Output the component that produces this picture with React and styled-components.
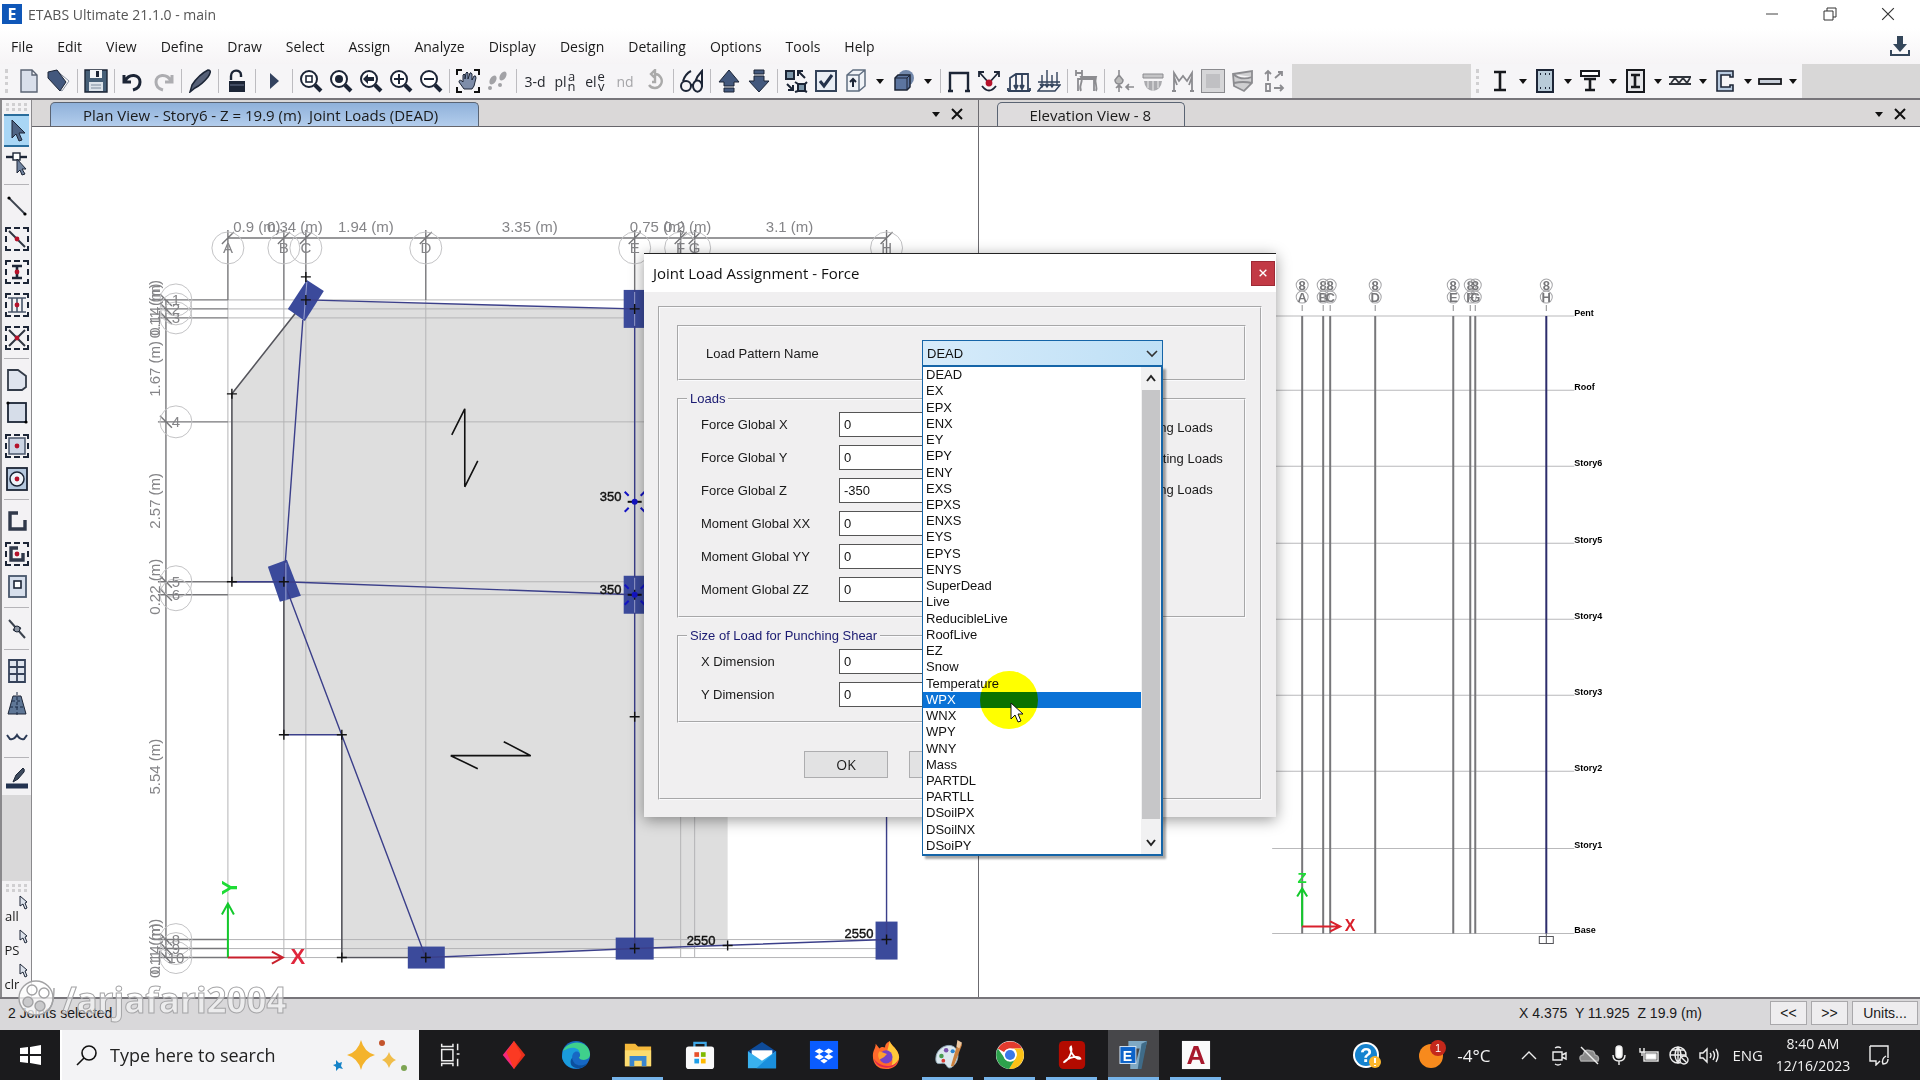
import React, { useState } from "react";
import styled, { createGlobalStyle, css } from "styled-components";

const INK = "#1c2536";
const NAVY = "#43587d";
const MUTED = "#8c8c90";
const RED = "#b5122b";

const menus = ["File", "Edit", "View", "Define", "Draw", "Select", "Assign", "Analyze", "Display", "Design", "Detailing", "Options", "Tools", "Help"];

const mainTools = [
  "new", "open", "|", "save", "|", "undo", "redo", "|", "pen", "|", "lock", "|", "run", "|",
  "zoomWindow", "zoomAll", "zoomBack", "zoomIn", "zoomOut", "|", "hand", "steps", "|",
  "view3d", "plan", "elev", "nd", "rotate", "|", "glasses", "|", "up", "down", "|",
  "shrink", "check", "box", "v", "solid", "v", "|", "frame", "joint", "lineLoad", "areaLoad", "|",
  "deform", "|", "drop", "shade", "moment", "panel", "stress", "axes",
];
const sectionTools = ["sectionI", "sectionRect", "sectionT", "sectionBox", "joist", "sectionC", "plate"];

const drawTools = [
  "pointer", "reshape", "|", "line", "quickLine", "quickColumn", "quickBeams", "quickBrace", "|",
  "poly", "rect", "quickRect", "circleArea", "|", "wall", "quickWall", "opening", "|",
  "link", "|", "grid", "tower", "tendon", "|", "sketch",
];

const patterns = [
  "DEAD", "EX", "EPX", "ENX", "EY", "EPY", "ENY", "EXS", "EPXS", "ENXS", "EYS", "EPYS", "ENYS",
  "SuperDead", "Live", "ReducibleLive", "RoofLive", "EZ", "Snow", "Temperature", "WPX", "WNX",
  "WPY", "WNY", "Mass", "PARTDL", "PARTLL", "DSoilPX", "DSoilNX", "DSoiPY",
];

const forces = [
  ["Force Global X", "0"],
  ["Force Global Y", "0"],
  ["Force Global Z", "-350"],
  ["Moment Global XX", "0"],
  ["Moment Global YY", "0"],
  ["Moment Global ZZ", "0"],
];
const sizes = [
  ["X Dimension", "0"],
  ["Y Dimension", "0"],
];
const loadOptions = ["Add to Existing Loads", "Replace Existing Loads", "Delete Existing Loads"];

const brackets = <path d="M1 5V1H6M9 1H15M18 1H23V5M23 9V15M23 19V23H18M15 23H9M6 23H1V19M1 15V9" stroke={INK} strokeWidth="2" fill="none" />;
const dot = <circle cx="12" cy="12" r="2.4" fill={RED} />;
const lens = (
  <>
    <circle cx="10" cy="10" r="8" fill="#fff" stroke={INK} strokeWidth="2" />
    <path d="M16 16L22 22" stroke={INK} strokeWidth="4" />
  </>
);
const arrowShape = "M7 1V19L11 15L14 22L17 21L14 14H20Z";

const glyphs = {
  new: <path d="M4 1H15L20 6V23H4ZM15 1V6H20" fill="#d9dfeb" stroke="#5b6474" strokeWidth="1.4" />,
  open: (
    <>
      <path d="M10 2L22 12L15 22L12 20" fill="#fff" stroke="#8b93a3" />
      <path d="M1 3L10 1L19 13L13 22L1 9Z" fill={NAVY} stroke={INK} />
    </>
  ),
  save: (
    <>
      <path d="M1 1H23V23H1Z" fill="#465f77" stroke={INK} strokeWidth="1.4" />
      <path d="M6 1H18V9H6Z" fill="#f4f6f9" />
      <path d="M12 2H15V8H12Z" fill={INK} />
      <path d="M5 13H19V22H5Z" fill="#dce3ea" />
      <path d="M7 16H17M7 19H17" stroke="#7d8b9c" />
    </>
  ),
  undo: <path d="M3 6V13H10M4 12C8 4 19 5 19 13C19 17 16 20 12 21" fill="none" stroke={INK} strokeWidth="3" />,
  redo: <path d="M21 6V13H14M20 12C16 4 5 5 5 13C5 17 8 20 12 21" fill="none" stroke="#adadb1" strokeWidth="3" />,
  pen: <path d="M2 23L4 16C8 10 14 4 20 1C24 1 22 5 20 8C16 13 11 17 7 19Z" fill="#566077" stroke={INK} strokeWidth="1.5" />,
  lock: (
    <>
      <path d="M6 11V7C6 0 16 0 16 6V8" fill="none" stroke={INK} strokeWidth="2.4" />
      <rect x="4" y="12" width="16" height="11" fill={INK} />
      <path d="M5 16H19" stroke="#66728b" />
    </>
  ),
  run: <path d="M8 4L17 12L8 20Z" fill="#33425f" />,
  zoomWindow: <>{lens}<rect x="7" y="7" width="6" height="6" fill="none" stroke={INK} strokeWidth="1.6" /></>,
  zoomAll: <>{lens}<circle cx="10" cy="10" r="4" fill={INK} /></>,
  zoomBack: <>{lens}<path d="M4 10L9 5V8H15V12H9V15Z" fill={INK} /></>,
  zoomIn: <>{lens}<path d="M10 5V15M5 10H15" stroke={INK} strokeWidth="2" /></>,
  zoomOut: <>{lens}<path d="M5 10H15" stroke={INK} strokeWidth="2" /></>,
  hand: (
    <>
      <path d="M1 6V1H6M18 1H23V6M23 18V23H18M6 23H1V18" fill="none" stroke="#111" strokeWidth="2" />
      <path d="M8 20L3 13Q3 10 6 12L7 13V6Q8 4 9 6V10L10 4Q11 2 12 4V10L14 4Q15 3 16 5V11L18 7Q20 6 20 9L18 17L16 20Z" fill="#7e8da9" stroke={INK} />
    </>
  ),
  steps: <g fill="#a2a2a6"><ellipse cx="7" cy="11" rx="3" ry="5" transform="rotate(30 7 11)" /><circle cx="4" cy="19" r="2" /><ellipse cx="17" cy="7" rx="3" ry="5" transform="rotate(30 17 7)" /><circle cx="14" cy="16" r="2" /></g>,
  rotate: <path d="M12 5A7 7 0 1 1 6 16M12 1V9L8 5ZM12 10V13H9" fill="none" stroke="#aaa" strokeWidth="2.4" />,
  glasses: <path d="M3 12C5 6 9 3 11 2M15 13C17 7 20 4 22 2V18M1 17A5 5 0 1 0 11 17A5 5 0 1 0 1 17M13 17A4 5 0 1 0 22 17A4 5 0 1 0 13 17M11 16L13 16" fill="none" stroke={INK} strokeWidth="2" />,
  up: <path d="M12 1L22 13H17V17H7V13H2ZM7 19H17V23H7Z" fill={NAVY} stroke={INK} />,
  down: <path d="M12 23L22 12H17V7H7V12H2ZM7 1H17V5H7Z" fill={NAVY} stroke={INK} />,
  shrink: <g fill="none" stroke={INK} strokeWidth="2"><rect x="2" y="2" width="8" height="8" fill="#7c95a8" /><path d="M21 9L14 2M14 7V2H19M3 15L9 21M9 16V21H4" /><rect x="14" y="15" width="7" height="7" fill="#7c95a8" /><path d="M11 13L14 15M23 13L21 15M11 23L14 22M23 23L21 22" /></g>,
  check: <><rect x="2" y="2" width="20" height="20" fill="#e9eef5" stroke="#34435a" strokeWidth="2" /><path d="M6 12L10 17L18 6" fill="none" stroke="#22314a" strokeWidth="3" /></>,
  box: <><path d="M3 6L9 1H21V17L15 22H3ZM3 6H15V22M15 6L21 1" fill="#f0f3f7" stroke="#5f6d80" strokeWidth="1.5" /><path d="M9 18V10M6 13L9 10L12 13" fill="none" stroke={INK} strokeWidth="2" /></>,
  solid: <><circle cx="14" cy="9" r="8" fill="#7288ab" /><path d="M3 9L6 6H18V18L15 21H3Z" fill="#5c75a0" stroke={INK} strokeWidth="1.5" /><path d="M3 9H15V21M15 9L18 6" fill="none" stroke={INK} /></>,
  frame: <path d="M3 22V4H21V22M1 22H6M18 22H23" fill="none" stroke={INK} strokeWidth="2.4" />,
  joint: <><path d="M12 14L3 4M12 14L21 4M2 8V3H7M17 3H22V8M5 17Q12 26 19 17" fill="none" stroke={INK} strokeWidth="1.8" /><circle cx="12" cy="14" r="3.4" fill={RED} /></>,
  lineLoad: <path d="M1 22H23M3 22V9L9 5H21V22M9 5V19M15 5V19M7 16L9 20L11 16M13 16L15 20L17 16M1 22V19M23 22V19" fill="none" stroke="#32425b" strokeWidth="1.8" />,
  areaLoad: <path d="M1 22L6 16H23L18 22ZM5 6V17M10 1V17M15 6V17M20 3V17M1 13H23M3 15L5 18L7 15M8 15L10 18L12 15M13 15L15 18L17 15" fill="none" stroke="#32425b" strokeWidth="1.4" />,
  deform: <path d="M2 1V7M2 4H8M8 1V7M4 22V10H20V22M7 22C4 16 10 13 7 8H22C20 14 24 18 22 22" fill="none" stroke={MUTED} strokeWidth="1.8" />,
  drop: <path d="M8 1V6L4 11A4 4 0 0 0 12 11L8 6M8 23V17M5 19L8 16L11 19M23 18H15M18 15L15 18L18 21" fill="#bbb" stroke={MUTED} strokeWidth="1.6" />,
  shade: <><path d="M2 5H22V9H2Z" fill="#c4c4c6" stroke={MUTED} /><path d="M3 12H21Q20 21 12 22Q4 21 3 12Z" fill="#aaaaae" /><path d="M7 12V19M12 12V22M17 12V19" stroke="#eee" /></>,
  moment: <path d="M3 22V4L8 12L12 7L16 12L21 4V22M1 22H5M19 22H23M3 8L6 16M21 8L18 16" fill="none" stroke={MUTED} strokeWidth="1.8" />,
  panel: <><rect x="0" y="0" width="24" height="24" fill="#d6d6d8" stroke="#8a8a8e" strokeWidth="2" /><rect x="5" y="5" width="14" height="14" fill="#c0c0c3" /></>,
  stress: <path d="M2 5L21 2V14L13 22L3 17ZM2 5Q10 12 21 8M3 14Q12 12 21 14" fill="#cfcfd1" stroke={MUTED} strokeWidth="1.8" />,
  axes: <path d="M7 12V2M4 5L7 2L10 5M14 9L21 3M17 3H21V7M13 19H22M19 16L22 19L19 22M5 15H9V22H5Z" fill="none" stroke={MUTED} strokeWidth="1.8" />,
  sectionI: <path d="M6 3H18M12 3V21M6 21H18" fill="none" stroke="#17191d" strokeWidth="2.6" />,
  sectionRect: <><rect x="4" y="1" width="16" height="22" fill="#b9cbd8" stroke={INK} strokeWidth="2" /><path d="M7 5H8M12 5H13M16 5H17M7 19H8M12 19H13M16 19H17" stroke={INK} strokeWidth="2" /></>,
  sectionT: <><rect x="3" y="2" width="18" height="5" fill="#fff" stroke="#17191d" strokeWidth="2" /><path d="M6 10H18M12 10V21M7 21H17" stroke="#17191d" strokeWidth="2.6" /></>,
  sectionBox: <><rect x="4" y="1" width="17" height="22" fill="#e6e7ea" stroke="#17191d" strokeWidth="2" /><path d="M8 6H17M12 6V18M8 18H17" stroke="#17191d" strokeWidth="2.6" /></>,
  joist: <path d="M1 8H23M1 15H23M3 14L7 9L11 14L15 9L19 14L22 9" fill="none" stroke="#30343b" strokeWidth="1.8" />,
  sectionC: <path d="M20 8V2H4V22H20V16H17V18H8V6H17V8Z" fill="#b9cbe0" stroke={INK} strokeWidth="1.6" />,
  plate: <rect x="1" y="10" width="22" height="5" fill="#c7ced9" stroke="#17191d" strokeWidth="1.8" />,
  pointer: <path d={arrowShape} fill="#4e6484" stroke={INK} />,
  reshape: <><path d="M1 5H22" stroke={INK} strokeWidth="2.4" /><rect x="8" y="1" width="7" height="7" fill="#fff" stroke={INK} strokeWidth="1.4" /><path d="M12 7V21L15 18L17 23L20 22L17 17H21Z" fill="#70839f" stroke={INK} /></>,
  line: <><path d="M4 4L20 20" stroke="#3b424e" strokeWidth="1.8" /><circle cx="4" cy="4" r="1.6" /><circle cx="20" cy="20" r="1.6" /></>,
  quickLine: <>{brackets}<path d="M4 4L20 20" stroke="#2f3540" strokeWidth="2" />{dot}</>,
  quickColumn: <>{brackets}<path d="M7 6H17M12 6V18M7 18H17" stroke={INK} strokeWidth="2.6" />{dot}</>,
  quickBeams: <>{brackets}<path d="M3 5H21M3 19H21M7 5V19M12 5V19M17 5V19" stroke="#49566a" strokeWidth="1.6" />{dot}</>,
  quickBrace: <>{brackets}<path d="M4 4L20 20M20 4L4 20" stroke="#2f3540" strokeWidth="2" />{dot}</>,
  poly: <path d="M3 2H13L21 8V19L17 22H3Z" fill="#dfe4ee" stroke="#333b48" strokeWidth="1.8" />,
  rect: <><rect x="3" y="2" width="18" height="19" fill="#d6dde9" stroke={INK} strokeWidth="1.8" /><circle cx="3" cy="2" r="1.6" /><circle cx="21" cy="21" r="1.6" /></>,
  quickRect: <>{brackets}<rect x="4" y="4" width="16" height="16" fill="#cdd6e5" stroke="#49566a" strokeWidth="1.5" />{dot}</>,
  circleArea: <><rect x="2" y="1" width="20" height="22" fill="#b6c9df" stroke={INK} strokeWidth="1.8" /><circle cx="12" cy="12" r="7" fill="#eef3f9" stroke={INK} strokeWidth="1.5" />{dot}</>,
  wall: <path d="M13 4H5V20H20V11" fill="none" stroke="#30394a" strokeWidth="3.4" />,
  quickWall: <>{brackets}<path d="M13 6H6V18H18V11" fill="none" stroke="#30394a" strokeWidth="3.4" />{dot}</>,
  opening: <><rect x="4" y="1" width="17" height="21" fill="#d7dfec" stroke="#48566b" strokeWidth="1.8" /><rect x="9" y="6" width="7" height="7" fill="#fff" stroke={INK} strokeWidth="1.6" /></>,
  link: <><path d="M4 3L20 21M8 13L16 11" stroke="#3b424e" strokeWidth="2" /><circle cx="12" cy="12" r="3" fill="#8b93a0" stroke={INK} /></>,
  grid: <path d="M4 1H20V23H4ZM4 8H20M4 15H20M12 1V23" fill="#dfe5ef" stroke="#35425a" strokeWidth="1.8" />,
  tower: <><path d="M8 4H16L21 22H3Z" fill="#5f7796" stroke={INK} /><path d="M12 0V24M5 15H19M7 9H17" stroke="#1a2a44" strokeDasharray="3 2" /></>,
  tendon: <path d="M2 10L5 14Q9 15 12 10Q15 15 19 14L22 10" fill="none" stroke="#2b3a55" strokeWidth="2" />,
  sketch: <><path d="M8 15L11 8L18 1Q20 2 19 5L13 12Z" fill="#3d4a5d" stroke={INK} /><path d="M1 19H23" stroke="#22324f" strokeWidth="5" /></>,
};

const textGlyphs = {
  view3d: "3-d",
  plan: ["pl", "a", "n"],
  elev: ["el", "e", "v"],
  nd: "nd",
};

const Glyph = ({ name }) => (
  <svg width="24" height="24" viewBox="0 0 24 24" aria-hidden="true">
    {glyphs[name]}
  </svg>
);

const ToolGlyph = ({ name }) => {
  const text = textGlyphs[name];
  if (!text) return <Glyph name={name} />;
  if (typeof text === "string") return <ToolText $muted={name === "nd"}>{text}</ToolText>;
  return (
    <ToolText>
      {text[0]}
      <Stacked>
        <span>{text[1]}</span>
        <span>{text[2]}</span>
      </Stacked>
    </ToolText>
  );
};

const CaretIcon = () => (
  <svg width="8" height="5" viewBox="0 0 8 5" aria-hidden="true">
    <path d="M0 0H8L4 5Z" fill="#111" />
  </svg>
);

const CloseIcon = ({ size, color, weight }) => (
  <svg width={size} height={size} viewBox="0 0 12 12" aria-hidden="true">
    <path d="M1 1L11 11M11 1L1 11" stroke={color} strokeWidth={weight} />
  </svg>
);

/* plan canvas */

const gridX = { A: 228, B: 284, C: 306, D: 426, E: 635, F: 681, G: 695, H: 887 };
const gridY = [["1", 300], ["2", 309], ["3", 318], ["4", 422], ["5", 582], ["6", 595], ["8", 940], ["9", 949], ["10", 958]];
const topDims = [["0.9 (m)", 257], ["0.34 (m)", 295], ["1.94 (m)", 366], ["3.35 (m)", 530], ["0.75 (m)", 658], ["0.2 (m)", 688], ["3.1 (m)", 790]];
const sideDims = [["0.14 (m)", 308], ["0.11 (m)", 311], ["1.67 (m)", 369], ["2.57 (m)", 501], ["0.22 (m)", 587], ["5.54 (m)", 767], ["0.14 (m)", 947], ["0.11 (m)", 951]];
const nodes = [[306, 277], [306, 300], [232, 394], [232, 582], [284, 582], [284, 735], [342, 735], [342, 958], [426, 958], [635, 309], [635, 595], [635, 717], [635, 949], [728, 946], [887, 940]];

const PlanCanvas = () => (
  <CanvasSvg viewBox="32 127 946 864" preserveAspectRatio="xMinYMin meet" role="img" aria-label="Plan view">
    <path d="M306 300L635 309H728V946L635 949L426 957H342V735H284V582H232V394Z" fill="#dedede" />
    <g stroke="#b4b4b6" strokeWidth="1">
      {Object.values(gridX).map((x) => (
        <path key={x} d={`M${x} 300V958`} />
      ))}
      {gridY.map(([n, y]) => (
        <path key={n} d={`M228 ${y}H887`} />
      ))}
    </g>
    <g stroke="#77777a" strokeWidth="1.4" fill="none">
      <path d="M228 238H887M166 300V958" />
      {Object.values(gridX).map((x) => (
        <path key={x} d={`M${x} 230V300M${x - 6} 244L${x + 6} 232`} />
      ))}
      {gridY.map(([n, y]) => (
        <path key={n} d={`M158 ${y}H228M160 ${y - 6}L172 ${y + 6}`} />
      ))}
    </g>
    <g fill="none" stroke="#c3c3c5">
      {Object.values(gridX).map((x) => (
        <circle key={x} cx={x} cy="248" r="16" />
      ))}
      {gridY.map(([n, y]) => (
        <circle key={n} cx="176" cy={y} r="16" />
      ))}
    </g>
    <g fill="#858588" fontSize="15" textAnchor="middle">
      {Object.entries(gridX).map(([n, x]) => (
        <text key={n} x={x} y="253">{n}</text>
      ))}
      {gridY.map(([n, y]) => (
        <text key={n} x="176" y={y + 5}>{n}</text>
      ))}
      {topDims.map(([t, x]) => (
        <text key={t} x={x} y="232">{t}</text>
      ))}
      {sideDims.map(([t, y]) => (
        <text key={y} x="160" y={y} transform={`rotate(-90 160 ${y})`}>{t}</text>
      ))}
    </g>
    <path d="M306 300L232 394V582H284V735M342 735V958H426" fill="none" stroke="#55555c" strokeWidth="1.6" />
    <g fill="#3b4a9b">
      <path d="M307 280L324 291L305 321L288 309Z" />
      <path d="M268 567L287 560L301 596L280 602Z" />
      <rect x="624" y="290" width="22" height="38" />
      <rect x="624" y="576" width="22" height="38" />
      <rect x="408" y="947" width="37" height="22" />
      <rect x="616" y="938" width="38" height="22" />
      <rect x="876" y="922" width="22" height="38" />
    </g>
    <g fill="none" stroke="#3b3f8a" strokeWidth="1.4">
      <path d="M306 300L635 309M303 320L284 582L635 595M232 582H284M284 582L426 958L635 949L887 940M284 735H342M635 290V949M887 300V940" />
    </g>
    <path d="M307 282L304 319M286 563V601M635 292V326M635 578V613" stroke="#9aa3d2" />
    <g stroke="#111" strokeWidth="1.4">
      {nodes.map(([x, y]) => (
        <path key={`${x}-${y}`} d={`M${x - 5} ${y}H${x + 5}M${x} ${y - 5}V${y + 5}`} />
      ))}
    </g>
    <g fill="none" stroke="#111" strokeWidth="1.6">
      <path d="M452 435L465 409V487L478 461" />
      <path d="M504 742L531 756H451L478 769" />
    </g>
    {[502, 595].map((y) => (
      <g key={y} stroke="#1414c4" strokeWidth="2">
        <path d={`M628 ${y}H642`} stroke="#111" />
        <circle cx="635" cy={y} r="2" fill="#1414c4" />
        <path d={`M625 ${y - 10}L629 ${y - 6}M645 ${y - 10}L641 ${y - 6}M625 ${y + 10}L629 ${y + 6}M645 ${y + 10}L641 ${y + 6}`} />
      </g>
    ))}
    <g fill="#111" fontSize="13" stroke="#111" strokeWidth="0.4">
      <text x="600" y="501">350</text>
      <text x="600" y="594">350</text>
      <text x="687" y="945">2550</text>
      <text x="845" y="938">2550</text>
    </g>
    <g fill="none" strokeWidth="2">
      <path d="M228 958V905M222 915L228 904L234 915" stroke="#13c92c" />
      <path d="M228 958H282M272 952L283 958L272 964" stroke="#c9202c" />
    </g>
    <text x="237" y="888" fontSize="22" fontWeight="bold" fill="#1edc35" textAnchor="middle" transform="rotate(-90 237 888)">Y</text>
    <text x="298" y="964" fontSize="22" fontWeight="bold" fill="#e0263c" textAnchor="middle">X</text>
  </CanvasSvg>
);

/* elevation canvas */

const elevX = [["A", 1302], ["B", 1323], ["C", 1330], ["D", 1375], ["E", 1453], ["F", 1470], ["G", 1475], ["H", 1546]];
const stories = [["Pent", 316], ["Roof", 390], ["Story6", 466], ["Story5", 543], ["Story4", 619], ["Story3", 695], ["Story2", 771], ["Story1", 848], ["Base", 933]];

const ElevationCanvas = () => (
  <CanvasSvg viewBox="979 127 941 864" preserveAspectRatio="xMinYMin meet" role="img" aria-label="Elevation view">
    {stories.map(([name, y]) => (
      <g key={name}>
        <path d={`M1272 ${y}H1574`} stroke="#b9b9bb" />
        <text x="1574" y={y} fontSize="9" fontWeight="bold" fill="#000">{name}</text>
      </g>
    ))}
    {elevX.map(([name, x]) => (
      <g key={name}>
        <path d={`M${x} 316V933`} stroke={name === "H" ? "#2d2d6c" : "#77777a"} strokeWidth="2" />
        <path d={`M${x} 305V311`} stroke="#8c8c8e" />
        <circle cx={x} cy="285" r="6" fill="none" stroke="#a5a5a8" />
        <circle cx={x} cy="297" r="6" fill="none" stroke="#a5a5a8" />
        <g fill="#77777a" fontSize="13" fontWeight="bold" textAnchor="middle">
          <text x={x} y="290">8</text>
          <text x={x} y="302">{name}</text>
        </g>
      </g>
    ))}
    <path d="M1539 936H1553V943H1539ZM1546 933V943" fill="none" stroke="#55555a" />
    <g fill="none" strokeWidth="2">
      <path d="M1302 926V889M1297 896L1302 888L1307 896" stroke="#13c92c" />
      <path d="M1302 926H1338M1330 921L1340 926L1330 931" stroke="#d9202c" />
    </g>
    <text x="1302" y="883" fontSize="15" fontWeight="bold" fill="#1edc35" textAnchor="middle">Z</text>
    <text x="1350" y="931" fontSize="16" fontWeight="bold" fill="#d9202c" textAnchor="middle">X</text>
  </CanvasSvg>
);

/* taskbar icons */

const appIcons = {
  taskview: <path d="M5 4V7H17V4M5 28V25H17V28M5 10H17V22H5ZM22 4V11M22 20V28M21 15H24" fill="none" stroke="#eee" strokeWidth="1.6" />,
  anydesk: (
    <>
      <path d="M16 1L28 16L16 31Z" fill="#e8301c" />
      <path d="M16 1L4 16L16 31Z" fill="#f5287a" />
      <path d="M16 1L24 16L16 31L8 13Z" fill="#fb3a23" />
    </>
  ),
  edge: (
    <>
      <circle cx="16" cy="16" r="15" fill="#1768c4" />
      <path d="M2 12C5 1 29 -3 31 15C31 22 22 23 19 19C24 14 15 6 2 12Z" fill="#3fd08c" />
      <path d="M2 12C12 5 20 9 20 14C17 10 11 13 12 20C13 27 20 29 27 26C18 34 3 30 1 18Z" fill="#1a9bdc" />
      <path d="M12 19C13 27 20 29 28 25C24 31 15 32 11 27Q9 22 12 19Z" fill="#0c4f9e" />
    </>
  ),
  explorer: (
    <>
      <path d="M2 4H13L16 7H30V28H2Z" fill="#f5b93b" />
      <path d="M2 11H30V28H2Z" fill="#fddc70" />
      <path d="M7 17H25V28H20V22H12V28H7Z" fill="#3a86cf" />
    </>
  ),
  store: (
    <>
      <path d="M10 8V3H22V8" fill="none" stroke="#3fa7e6" strokeWidth="2.4" />
      <rect x="1" y="7" width="30" height="24" rx="3" fill="#fafafa" />
      <path d="M10 13H15V18H10Z" fill="#e8502a" />
      <path d="M17 13H22V18H17Z" fill="#7fba00" />
      <path d="M10 20H15V25H10Z" fill="#1c9ee8" />
      <path d="M17 20H22V25H17Z" fill="#ffb900" />
    </>
  ),
  mail: (
    <>
      <path d="M1 12L16 2L31 12V20H1Z" fill="#0e4b99" />
      <path d="M5 11H27V24H5Z" fill="#fff" />
      <path d="M1 12L16 22L31 12V30H1Z" fill="#39b1ee" />
      <path d="M31 12L10 30H31Z" fill="#1a8fdc" />
    </>
  ),
  dropbox: (
    <>
      <rect x="1" y="1" width="30" height="30" fill="#0a5cff" />
      <path d="M11 9L16 12L11 15L6 12ZM21 9L26 12L21 15L16 12ZM11 15L16 18L11 21L6 18ZM21 15L26 18L21 21L16 18ZM16 20L20 22L16 25L12 22Z" fill="#fff" />
    </>
  ),
  firefox: (
    <>
      <path d="M16 31C7 31 2 25 2 17C2 11 5 9 5 4L9 9C11 7 13 7 15 8C15 4 18 2 20 1C21 6 29 9 30 18C30 26 24 31 16 31Z" fill="#ff6a2b" />
      <path d="M20 1C21 6 29 9 30 18C29 24 25 27 22 27C25 20 20 15 17 13C18 9 19 5 20 1Z" fill="#ffc83a" />
      <circle cx="16" cy="18" r="7" fill="#7542c8" />
      <path d="M9 12L17 15L14 18L9 21Q6 16 9 12Z" fill="#ffa02e" />
      <path d="M3 20C6 32 26 33 29 21C24 31 9 29 3 20Z" fill="#e22850" />
    </>
  ),
  paint: (
    <>
      <path d="M3 20C3 9 15 3 22 7C29 11 28 24 20 29C15 32 15 26 12 25C8 24 3 28 3 20Z" fill="#dce8ee" stroke="#8fa8b5" />
      <circle cx="9" cy="17" r="2.4" fill="#4a9a52" />
      <circle cx="14" cy="11" r="2.4" fill="#7a52ad" />
      <circle cx="21" cy="12" r="2.2" fill="#2c84cf" />
      <circle cx="11" cy="22" r="2" fill="#d93d34" />
      <path d="M27 1L31 5L22 28L19 28Z" fill="#cb813f" />
      <path d="M26 0L31 3L28 9L25 7Z" fill="#ecc7a0" />
    </>
  ),
  chrome: (
    <>
      <circle cx="16" cy="16" r="15" fill="#fff" />
      <path d="M3 9A15 15 0 0 1 29 9H16A7 7 0 0 0 10 13Z" fill="#e33b2e" />
      <path d="M29 9A15 15 0 0 1 15 31L22 19A7 7 0 0 0 20 9Z" fill="#fbc116" />
      <path d="M3 9A15 15 0 0 0 15 31L21 21A7 7 0 0 1 10 19Z" fill="#2da14c" />
      <circle cx="16" cy="16" r="7" fill="#fff" />
      <circle cx="16" cy="16" r="5.4" fill="#3b78e7" />
    </>
  ),
  acrobat: (
    <>
      <rect x="2" y="1" width="28" height="30" rx="5" fill="#b30b00" />
      <path d="M7 24C12 22 17 13 15 7C12 9 18 21 25 20C24 16 12 18 7 24Z" fill="none" stroke="#fff" strokeWidth="1.8" />
    </>
  ),
  etabs: (
    <>
      <path d="M10 1H30L22 31H12V24H18L22 9H10Z" fill="#7fa9c4" />
      <path d="M24 4L30 1L24 31H20Z" fill="#3f6b88" />
      <rect x="1" y="7" width="17" height="18" fill="#0d63c9" stroke="#dce9f6" />
      <text x="9" y="22" fontSize="15" fontWeight="bold" fill="#fff" textAnchor="middle">E</text>
    </>
  ),
  autocad: (
    <>
      <rect x="1" y="1" width="30" height="30" fill="#fafafa" />
      <text x="16" y="26" fontSize="28" fontWeight="bold" fill="#a8182c" textAnchor="middle">A</text>
    </>
  ),
};
const apps = [
  ["taskview"], ["anydesk"], ["edge"], ["explorer", true], ["store"], ["mail"], ["dropbox"], ["firefox"],
  ["paint", true], ["chrome", true], ["acrobat", true], ["etabs", true, true], ["autocad", true],
];

const trayIcons = {
  "Show hidden icons": <path d="M4 15L11 8L18 15" />,
  "Meet now": <path d="M5 8H14V16H5ZM14 11L18 9V15L14 13M7 4Q10 2 13 4M7 20Q10 22 13 20" />,
  "OneDrive": <><path d="M3 17Q0 12 5 11Q7 4 13 7Q16 6 17 11Q22 12 20 17Z" fill="#8b8b8b" stroke="#aaa" /><path d="M3 3L20 20" /></>,
  "Microphone": <><rect x="8" y="2" width="6" height="12" rx="3" fill="#fff" /><path d="M5 11Q5 17 11 17Q17 17 17 11M11 17V21" /></>,
  "Battery": <><rect x="6" y="8" width="14" height="9" /><path d="M8 10H18V15H8Z" fill="#fff" /><path d="M2 4V8H6V4M4 8V12" /></>,
  "Network": <><circle cx="10" cy="11" r="8" /><path d="M2 11H18M10 3V19M4 6H16M10 3Q4 11 10 19M10 3Q16 11 10 19" /><circle cx="16" cy="16" r="4" fill="#1b1b1d" /><path d="M13 13L19 19" /></>,
  "Volume": <path d="M2 9H5L9 5V18L5 14H2ZM12 9Q14 11 12 14M15 7Q18 11 15 16M18 5Q22 11 18 18" />,
};

const Sparkles = () => (
  <svg width="76" height="34" viewBox="0 0 76 34" aria-hidden="true">
    <path d="M29 2Q32 14 43 17Q32 20 29 32Q26 20 15 17Q26 14 29 2Z" fill="#f4b32c" />
    <path d="M57 14Q59 20 64 22Q59 24 57 30Q55 24 50 22Q55 20 57 14Z" fill="#f0bd4a" />
    <path d="M4 22L7 25L10 24L9 28L11 31L7 30L4 33V29L1 27L4 26Z" fill="#1583c8" />
    <circle cx="50" cy="5" r="3" fill="#c3542c" />
    <circle cx="72" cy="30" r="3" fill="#7da453" />
  </svg>
);

const Reel = () => (
  <svg width="40" height="40" viewBox="0 0 40 40" aria-hidden="true">
    <g fill="rgba(255,255,255,0.75)" stroke="#a2a2a4" strokeWidth="1.4">
      <circle cx="18" cy="18" r="17" />
      <circle cx="14" cy="10" r="5" />
      <circle cx="26" cy="13" r="5" />
      <circle cx="10" cy="22" r="5" fill="#c9c9cb" />
      <circle cx="22" cy="26" r="5" fill="#c9c9cb" />
      <path d="M28 32Q36 28 36 8" fill="none" />
    </g>
  </svg>
);

const NumberRow = ({ label, value }) => {
  const id = label.replace(/ /g, "-").toLowerCase();
  return (
    <>
      <FieldLabel htmlFor={id}>{label}</FieldLabel>
      <NumberInput id={id} type="text" defaultValue={value} />
    </>
  );
};

const LoadDialog = () => {
  const [pattern, setPattern] = useState("DEAD");
  const [hovered, setHovered] = useState("WPX");

  return (
    <Dialog role="dialog" aria-label="Joint Load Assignment - Force">
      <DialogTitle>
        <h2>Joint Load Assignment - Force</h2>
        <DialogClose type="button" aria-label="Close">
          <CloseIcon size={8} color="#fff" weight={2} />
        </DialogClose>
      </DialogTitle>
      <DialogBody>
        <DialogFrame>
          <PatternBox>
            <label htmlFor="pattern">Load Pattern Name</label>
            <PatternPicker>
              <PatternSelect id="pattern" value={pattern} onChange={(e) => setPattern(e.target.value)}>
                {patterns.map((p) => (
                  <option key={p}>{p}</option>
                ))}
              </PatternSelect>
              <PickerArrow width="12" height="8" viewBox="0 0 12 8">
                <path d="M1 1L6 6L11 1" fill="none" stroke="#333" strokeWidth="1.6" />
              </PickerArrow>
              <PatternMenu>
                <PatternList role="listbox" aria-label="Load patterns">
                  {patterns.map((p) => (
                    <PatternItem
                      key={p}
                      role="option"
                      aria-selected={p === pattern}
                      $active={p === hovered}
                      onMouseEnter={() => setHovered(p)}
                      onClick={() => setPattern(p)}
                    >
                      {p}
                    </PatternItem>
                  ))}
                </PatternList>
                <ScrollTrack>
                  <svg width="10" height="8" viewBox="0 0 10 8"><path d="M1 7L5 2L9 7" fill="none" stroke="#222" strokeWidth="2" /></svg>
                  <ScrollThumb />
                  <svg width="10" height="8" viewBox="0 0 10 8"><path d="M1 1L5 6L9 1" fill="none" stroke="#222" strokeWidth="2" /></svg>
                </ScrollTrack>
                <ClickHalo />
                <Cursor width="14" height="21" viewBox="0 0 14 21">
                  <path d="M1 1V17L5 13L8 20L11 19L8 12H13Z" fill="#fff" stroke="#111" />
                </Cursor>
              </PatternMenu>
            </PatternPicker>
          </PatternBox>
          <GroupRow>
            <Group $wide>
              <legend>Loads</legend>
              <FieldGrid>
                {forces.map(([label, value]) => (
                  <NumberRow key={label} label={label} value={value} />
                ))}
              </FieldGrid>
            </Group>
            <Group>
              <legend>Options</legend>
              <RadioList>
                {loadOptions.map((o, i) => (
                  <label key={o}>
                    <input type="radio" name="mode" defaultChecked={i === 1} />
                    {o}
                  </label>
                ))}
              </RadioList>
            </Group>
          </GroupRow>
          <GroupRow>
            <Group $wide>
              <legend>Size of Load for Punching Shear</legend>
              <FieldGrid>
                {sizes.map(([label, value]) => (
                  <NumberRow key={label} label={label} value={value} />
                ))}
              </FieldGrid>
            </Group>
          </GroupRow>
          <DialogActions>
            <DialogButton type="button">OK</DialogButton>
            <DialogButton type="button">Close</DialogButton>
            <DialogButton type="button">Apply</DialogButton>
          </DialogActions>
        </DialogFrame>
      </DialogBody>
    </Dialog>
  );
};

const App = () => {
  return (
    <Window>
      <GlobalStyle />
      <TitleBar>
        <AppBadge>E</AppBadge>
        <h1>ETABS Ultimate 21.1.0 - main</h1>
        <CaptionButtons>
          <button type="button" aria-label="Minimize">
            <svg width="14" height="14" viewBox="0 0 14 14"><path d="M1 7H13" stroke="#444" /></svg>
          </button>
          <button type="button" aria-label="Restore">
            <svg width="14" height="14" viewBox="0 0 14 14"><path d="M1 4H10V13H1ZM4 4V1H13V10H10" fill="none" stroke="#333" /></svg>
          </button>
          <button type="button" aria-label="Close">
            <CloseIcon size={14} color="#333" weight={1} />
          </button>
        </CaptionButtons>
      </TitleBar>
      <MenuBar>
        {menus.map((m) => (
          <button key={m} type="button">{m}</button>
        ))}
        <DownloadButton type="button" aria-label="Download">
          <svg width="20" height="22" viewBox="0 0 20 22">
            <path d="M7 1H13V9H17L10 17L3 9H7Z" fill="#34465a" />
            <path d="M1 15V20H19V15" fill="none" stroke="#34465a" strokeWidth="2" />
          </svg>
        </DownloadButton>
      </MenuBar>
      <ToolbarRow>
        <Toolbar>
          <Grip />
          {mainTools.map((t, i) => {
            if (t === "|") return <Separator key={i} />;
            if (t === "v") return <CaretButton key={i} type="button" aria-label="More" $width={18}><CaretIcon /></CaretButton>;
            return <ToolButton key={i} type="button" aria-label={t}><ToolGlyph name={t} /></ToolButton>;
          })}
        </Toolbar>
        <Toolbar $second>
          <Grip />
          {sectionTools.map((t) => (
            <React.Fragment key={t}>
              <ToolButton type="button" aria-label={t}><Glyph name={t} /></ToolButton>
              <CaretButton type="button" aria-label={`${t} menu`} $width={15}><CaretIcon /></CaretButton>
            </React.Fragment>
          ))}
        </Toolbar>
      </ToolbarRow>
      <Workspace>
        <Sidebar>
          <SideTools>
            <SideGrip />
            {drawTools.map((t, i) =>
              t === "|" ? (
                <SideSeparator key={i} />
              ) : (
                <SideButton key={i} type="button" aria-label={t} $active={t === "pointer"}><Glyph name={t} /></SideButton>
              )
            )}
          </SideTools>
          <SideTools>
            <SideGrip />
            {["all", "PS", "clr"].map((t) => (
              <SelectButton key={t} type="button">
                <span>{t}</span>
                <svg width="9" height="15" viewBox="0 0 9 15"><path d="M1 1V11L4 9L6 14L8 13L6 8L8 7Z" fill="#dde3ec" stroke={INK} /></svg>
              </SelectButton>
            ))}
          </SideTools>
        </Sidebar>
        <Pane $share={946}>
          <TabStrip>
            <Tab type="button" $active>{"Plan View - Story6 - Z = 19.9 (m)\u00a0 Joint Loads (DEAD)"}</Tab>
            <StripButton type="button" aria-label="View list"><CaretIcon /></StripButton>
            <StripButton type="button" aria-label="Close view"><CloseIcon size={12} color="#111" weight={2} /></StripButton>
          </TabStrip>
          <PlanCanvas />
        </Pane>
        <Pane $share={942} $divided>
          <TabStrip>
            <Tab type="button">Elevation View - 8</Tab>
            <StripButton type="button" aria-label="View list"><CaretIcon /></StripButton>
            <StripButton type="button" aria-label="Close view"><CloseIcon size={12} color="#111" weight={2} /></StripButton>
          </TabStrip>
          <ElevationCanvas />
        </Pane>
        <LoadDialog />
      </Workspace>
      <StatusBar>
        <span>2 Joints selected</span>
        <Coordinates>{"X 4.375\u00a0 Y 11.925\u00a0 Z 19.9 (m)"}</Coordinates>
        <StatusButton type="button" aria-label="Previous">&lt;&lt;</StatusButton>
        <StatusButton type="button" aria-label="Next">&gt;&gt;</StatusButton>
        <StatusButton type="button" $wide>Units...</StatusButton>
        <Watermark>
          <Reel />
          <span>/arjafari2004</span>
        </Watermark>
      </StatusBar>
      <Taskbar>
        <StartButton type="button" aria-label="Start">
          <svg width="22" height="22" viewBox="0 0 22 22">
            <path d="M1 4L9 3V10H1ZM11 3L22 1V10H11ZM1 12H9V19L1 18ZM11 12H22V21L11 19Z" fill="#fff" />
          </svg>
        </StartButton>
        <SearchBox>
          <svg width="22" height="22" viewBox="0 0 22 22" aria-hidden="true">
            <circle cx="13" cy="9" r="7" fill="none" stroke="#111" strokeWidth="1.6" />
            <path d="M8 14L1 21" stroke="#111" strokeWidth="1.6" />
          </svg>
          <input type="text" placeholder="Type here to search" aria-label="Type here to search" />
          <Sparkles />
        </SearchBox>
        <AppList>
          {apps.map(([name, open, active]) => (
            <AppButton key={name} type="button" aria-label={name} $open={open} $active={active}>
              <svg width="30" height="30" viewBox="0 0 32 32">{appIcons[name]}</svg>
            </AppButton>
          ))}
        </AppList>
        <Tray>
          <TrayHelp type="button" aria-label="Help">
            <svg width="30" height="30" viewBox="0 0 30 30">
              <circle cx="14" cy="15" r="13" fill="#fff" />
              <circle cx="14" cy="15" r="11" fill="#1583cf" />
              <text x="14" y="22" fontSize="20" fontWeight="bold" fill="#fff" textAnchor="middle">?</text>
              <circle cx="23" cy="22" r="6" fill="#fbb62d" />
              <path d="M23 18V23M23 25V26" stroke="#fff" strokeWidth="2" />
            </svg>
          </TrayHelp>
          <Weather type="button">
            <svg width="28" height="30" viewBox="0 0 28 30">
              <circle cx="13" cy="16" r="12" fill="#f78a1d" />
              <circle cx="20" cy="8" r="8" fill="#c4281b" />
              <text x="20" y="12" fontSize="11" fill="#fff" textAnchor="middle">1</text>
            </svg>
            -4°C
          </Weather>
          {Object.entries(trayIcons).map(([name, shape]) => (
            <TrayButton key={name} type="button" aria-label={name}>
              <svg width="22" height="22" viewBox="0 0 22 22" fill="none" stroke="#eee" strokeWidth="1.4">{shape}</svg>
            </TrayButton>
          ))}
          <Language type="button">ENG</Language>
          <Clock>
            <span>8:40 AM</span>
            <span>12/16/2023</span>
          </Clock>
          <Notifications type="button" aria-label="Notifications">
            <svg width="22" height="22" viewBox="0 0 22 22" fill="none" stroke="#eee" strokeWidth="1.4">
              <path d="M2 2H20V14M2 2V17H8V21L12 17" />
              <path d="M18 12Q13 15 15 20Q20 20 20 15" />
            </svg>
          </Notifications>
        </Tray>
      </Taskbar>
    </Window>
  );
};

const uiFont = `"Open Sans", "Noto Sans", sans-serif`;
const formFont = `"Liberation Sans", Arial, sans-serif`;

const GlobalStyle = createGlobalStyle`
  * {
    box-sizing: border-box;
  }
  body {
    margin: 0;
    background: #fff;
    font-family: ${uiFont};
    color: #1a1a1a;
  }
  button {
    margin: 0;
    padding: 0;
    border: 0;
    background: none;
    font: inherit;
    color: inherit;
  }
  svg {
    display: block;
    flex-shrink: 0;
    font-family: ${formFont};
  }
`;

const centered = css`
  display: flex;
  align-items: center;
  justify-content: center;
`;

const Window = styled.div`
  display: flex;
  flex-direction: column;
  min-height: 100vh;
`;

const TitleBar = styled.header`
  display: flex;
  align-items: center;
  height: 28px;
  padding-left: 2px;
  gap: 6px;
  h1 {
    margin: 0;
    font-size: 14px;
    font-weight: 400;
    color: #555;
  }
`;

const AppBadge = styled.span`
  ${centered}
  width: 20px;
  height: 20px;
  background: #0f57b8;
  color: #fff;
  font-size: 16px;
  font-weight: 700;
`;

const CaptionButtons = styled.div`
  display: flex;
  margin-left: auto;
  padding-right: 3px;
  button {
    ${centered}
    width: 58px;
    height: 28px;
  }
`;

const MenuBar = styled.nav`
  display: flex;
  align-items: center;
  height: 36px;
  padding: 0 10px 0 11px;
  gap: 24px;
  background: linear-gradient(#fff, #f6f4f6);
  font-size: 14px;
`;

const DownloadButton = styled.button`
  margin-left: auto;
`;

const ToolbarRow = styled.div`
  display: flex;
  height: 34px;
  background: #d8d7d7;
`;

const Toolbar = styled.div`
  display: flex;
  align-items: center;
  height: 34px;
  padding-right: ${(p) => (p.$second ? 2 : 4)}px;
  margin-left: ${(p) => (p.$second ? "auto" : 0)};
  margin-right: ${(p) => (p.$second ? 118 : 0)}px;
  background: #f6f5f7;
`;

const Grip = styled.span`
  width: 5px;
  height: 24px;
  margin: 0 4px 0 5px;
  border-left: 3px dotted #d0cfd1;
`;

const Separator = styled.span`
  width: 1px;
  height: 24px;
  margin: 0 3px;
  background: #bdbcc0;
`;

const ToolButton = styled.button`
  ${centered}
  width: 30px;
  height: 30px;
`;

const CaretButton = styled.button`
  ${centered}
  width: ${(p) => p.$width}px;
  height: 30px;
`;

const ToolText = styled.span`
  display: flex;
  align-items: center;
  font-size: 14px;
  color: ${(p) => (p.$muted ? "#a5a5a8" : "#23262c")};
`;

const Stacked = styled.span`
  display: flex;
  flex-direction: column;
  padding-left: 1px;
  font-size: 13px;
  line-height: 10px;
`;

const Workspace = styled.main`
  position: relative;
  display: flex;
  flex: 1;
  border-top: 2px solid #77757a;
`;

const Sidebar = styled.aside`
  display: flex;
  flex-direction: column;
  justify-content: space-between;
  width: 32px;
  background: #d9d8d9;
  border-left: 2px solid #8a898c;
  border-right: 1px solid #8a898c;
`;

const SideTools = styled.div`
  display: flex;
  flex-direction: column;
  padding: 0 2px;
  background: #f3f2f4;
`;

const SideGrip = styled.span`
  height: 8px;
  margin: 3px 2px;
  border-top: 3px dotted #d0cfd1;
  border-bottom: 3px dotted #d0cfd1;
`;

const SideSeparator = styled.span`
  height: 1px;
  margin: 4px 0;
  background: #b5b4b8;
`;

const SideButton = styled.button`
  ${centered}
  height: 33px;
  ${(p) =>
    p.$active &&
    css`
      background: #a9d6f5;
      border-top: 2px solid #2a6d9c;
      border-bottom: 2px solid #2a6d9c;
    `}
`;

const SelectButton = styled.button`
  display: flex;
  justify-content: center;
  height: 34px;
  font-size: 13px;
  line-height: 42px;
`;

const Pane = styled.section`
  display: flex;
  flex: ${(p) => p.$share} 1 0;
  flex-direction: column;
  min-width: 0;
  border-left: ${(p) => (p.$divided ? "1px solid #6c6b70" : "0")};
`;

const TabStrip = styled.div`
  display: flex;
  align-items: flex-end;
  height: 27px;
  padding: 0 10px 0 18px;
  background: #dad8d8;
  border-bottom: 1px solid #66656a;
`;

const Tab = styled.button`
  height: 24px;
  padding: 0 ${(p) => (p.$active ? 40 : 33)}px 0 32px;
  border: 1px solid #5a6473;
  border-bottom: 0;
  border-radius: 5px 5px 0 0;
  background: ${(p) => (p.$active ? "linear-gradient(#8fb1da, #b3cdec)" : "#dedcdd")};
  font-size: 15px;
  line-height: 20px;
  white-space: nowrap;
  margin-right: auto;
`;

const StripButton = styled.button`
  ${centered}
  width: 21px;
  height: 24px;
`;

const CanvasSvg = styled.svg`
  flex: 1;
  width: 100%;
  min-height: 0;
  background: #fff;
`;

const Dialog = styled.section`
  position: absolute;
  top: 153px;
  left: 644px;
  width: 632px;
  background: #f0eff0;
  border-top: 1px solid #222;
  box-shadow: 0 3px 14px rgba(0, 0, 0, 0.4);
  font-family: ${formFont};
  font-size: 13px;
`;

const DialogTitle = styled.header`
  display: flex;
  align-items: center;
  justify-content: space-between;
  height: 38px;
  padding: 0 1px 0 9px;
  background: #fff;
  h2 {
    margin: 0;
    font-family: ${uiFont};
    font-size: 15px;
    line-height: 20px;
    font-weight: 400;
    color: #111;
  }
`;

const DialogClose = styled.button`
  ${centered}
  width: 24px;
  height: 25px;
  background: #c23a45;
  border: 1px solid #9d2a35;
`;

const DialogBody = styled.div`
  padding: 14px 14px 17px;
`;

const boxEdge = css`
  border: 2px groove #fafafc;
`;

const DialogFrame = styled.div`
  ${boxEdge}
  padding: 17px 14px 20px 17px;
`;

const PatternBox = styled.div`
  ${boxEdge}
  display: flex;
  align-items: center;
  height: 56px;
  padding-left: 27px;
  label {
    width: 216px;
  }
`;

const PatternPicker = styled.div`
  position: relative;
  width: 241px;
`;

const PatternSelect = styled.select`
  display: block;
  width: 100%;
  height: 26px;
  padding: 0 4px;
  appearance: none;
  border: 1px solid #1565a8;
  border-radius: 0;
  background: linear-gradient(90deg, #d6ebfa, #bfe0f6);
  font: inherit;
  color: #111;
`;

const PickerArrow = styled.svg`
  position: absolute;
  top: 10px;
  right: 5px;
  pointer-events: none;
`;

const PatternMenu = styled.div`
  position: absolute;
  top: 100%;
  left: 0;
  display: flex;
  width: 100%;
  height: 490px;
  background: #fff;
  border: 1px solid #1565a8;
  border-width: 1px 2px 2px 1px;
  box-shadow: 3px 3px 2px rgba(0, 0, 0, 0.35);
`;

const PatternList = styled.ul`
  display: flex;
  flex: 1;
  flex-direction: column;
  margin: 0;
  padding: 0;
  list-style: none;
`;

const PatternItem = styled.li`
  display: flex;
  flex: 1;
  align-items: center;
  padding-left: 3px;
  line-height: 16px;
  background: ${(p) => (p.$active ? "#0a72d6" : "transparent")};
  color: ${(p) => (p.$active ? "#fff" : "#111")};
`;

const ScrollTrack = styled.div`
  display: flex;
  flex-direction: column;
  align-items: center;
  gap: 8px;
  width: 20px;
  padding: 7px 1px;
  background: #f1f1f2;
`;

const ScrollThumb = styled.span`
  flex: 1;
  width: 100%;
  margin-bottom: 12px;
  background: #c6c6c8;
`;

const ClickHalo = styled.span`
  position: absolute;
  top: 304px;
  left: 57px;
  width: 58px;
  height: 58px;
  border-radius: 50%;
  background: #ff0;
  mix-blend-mode: multiply;
  pointer-events: none;
`;

const Cursor = styled.svg`
  position: absolute;
  top: 335px;
  left: 87px;
  pointer-events: none;
`;

const GroupRow = styled.div`
  display: flex;
  gap: 14px;
  margin-top: 9px;
`;

const Group = styled.fieldset`
  ${boxEdge}
  min-width: 0;
  margin: 0;
  padding: 4px 0 14px 8px;
  flex: ${(p) => (p.$wide ? "0 0 356px" : "1")};
  legend {
    padding: 0 3px;
    line-height: 18px;
    color: #1b1b72;
  }
`;

const FieldGrid = styled.div`
  display: grid;
  grid-template-columns: 138px 120px;
  align-items: center;
  gap: 8px 0;
  padding-left: 14px;
`;

const FieldLabel = styled.label`
  white-space: nowrap;
`;

const NumberInput = styled.input`
  height: 25px;
  padding: 0 4px;
  border: 1px solid #555;
  background: #fff;
  font: inherit;
  color: #111;
`;

const RadioList = styled.div`
  display: flex;
  flex-direction: column;
  gap: 13px;
  padding: 7px 0 0 9px;
  label {
    display: flex;
    align-items: center;
    line-height: 18px;
    white-space: nowrap;
  }
  input {
    width: 13px;
    height: 13px;
    margin: 0 8px 0 0;
  }
`;

const DialogActions = styled.div`
  display: flex;
  gap: 21px;
  margin-top: 28px;
  padding-left: 127px;
`;

const DialogButton = styled.button`
  width: 84px;
  height: 27px;
  border: 1px solid #adadaf;
  background: #e2e2e3;
  font-family: ${uiFont};
  font-size: 14px;
`;

const StatusBar = styled.footer`
  position: relative;
  display: flex;
  align-items: center;
  gap: 4px;
  height: 33px;
  padding: 0 2px 4px 8px;
  background: #d9d8da;
  border-top: 2px solid #77757a;
  font-family: ${formFont};
  font-size: 14px;
`;

const Coordinates = styled.span`
  margin-left: auto;
  margin-right: 64px;
`;

const StatusButton = styled.button`
  width: ${(p) => (p.$wide ? 66 : 37)}px;
  height: 24px;
  border: 1px solid #a9a8ab;
  background: #eeedef;
`;

const Watermark = styled.div`
  position: absolute;
  left: 18px;
  bottom: 8px;
  display: flex;
  align-items: center;
  gap: 4px;
  font-family: ${uiFont};
  font-size: 35px;
  line-height: 44px;
  font-weight: 700;
  color: rgba(255, 255, 255, 0.5);
  -webkit-text-stroke: 1px #a5a5a7;
  pointer-events: none;
`;

const Taskbar = styled.footer`
  display: flex;
  height: 50px;
  background: #1b1b1d;
  color: #f2f2f2;
`;

const StartButton = styled.button`
  ${centered}
  width: 60px;
`;

const SearchBox = styled.div`
  display: flex;
  align-items: center;
  width: 359px;
  padding: 0 11px 0 14px;
  gap: 12px;
  background: #f3f3f5;
  border-left: 2px solid #fff;
  input {
    flex: 1;
    min-width: 0;
    padding: 0;
    border: 0;
    outline: 0;
    background: none;
    font-family: ${uiFont};
    font-size: 18px;
    color: #222;
    &::placeholder {
      color: #222;
      opacity: 1;
    }
  }
`;

const AppList = styled.div`
  display: flex;
  gap: 11px;
  padding-left: 7px;
`;

const AppButton = styled.button`
  ${centered}
  width: 51px;
  border-bottom: 3px solid ${(p) => (p.$open ? "#76b4ea" : "transparent")};
  border-top: 3px solid ${(p) => (p.$active ? "#47474a" : "transparent")};
  background: ${(p) => (p.$active ? "#47474a" : "transparent")};
`;

const Tray = styled.div`
  display: flex;
  align-items: center;
  margin-left: auto;
  padding-right: 30px;
  font-size: 15px;
`;

const TrayHelp = styled.button`
  margin-right: 36px;
`;

const Weather = styled.button`
  display: flex;
  align-items: center;
  gap: 11px;
  margin-right: 24px;
  font-size: 17px;
  white-space: nowrap;
`;

const TrayButton = styled.button`
  ${centered}
  width: 30px;
  height: 50px;
`;

const Language = styled.button`
  margin-left: 8px;
`;

const Clock = styled.div`
  display: flex;
  flex-direction: column;
  align-items: center;
  width: 100px;
  font-size: 14px;
  line-height: 22px;
`;

const Notifications = styled.button`
  margin-left: 5px;
`;

export default App;
